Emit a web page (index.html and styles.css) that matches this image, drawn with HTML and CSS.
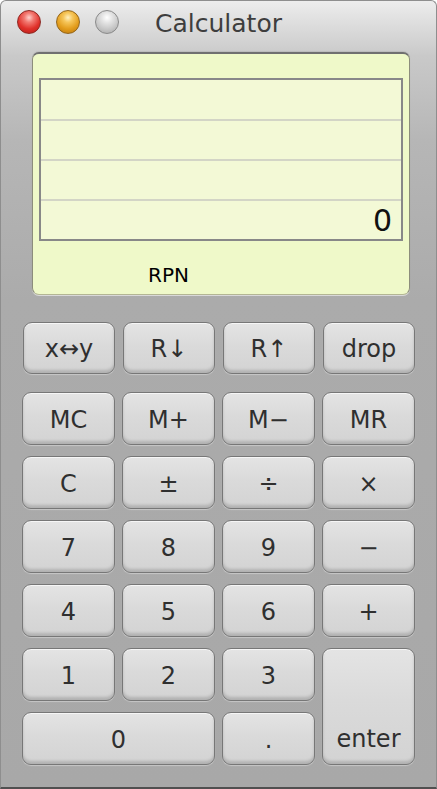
FILE: index.html
```html
<!DOCTYPE html>
<html>
<head>
<meta charset="utf-8">
<title>Calculator</title>
<link rel="stylesheet" href="styles.css">
</head>
<body>
<div class="window">
  <div class="titlebar">
    <div class="lights">
      <span class="light red"></span>
      <span class="light yellow"></span>
      <span class="light gray"></span>
    </div>
    <div class="title">Calculator</div>
    <div></div>
  </div>
  <div class="panel">
    <div class="lcd">
      <div class="lcd-row"></div>
      <div class="lcd-row"></div>
      <div class="lcd-row"></div>
      <div class="lcd-row value">0</div>
    </div>
    <div class="mode">RPN</div>
  </div>
  <div class="keypad">
    <button class="key top">x↔y</button>
    <button class="key top">R↓</button>
    <button class="key top">R↑</button>
    <button class="key top">drop</button>
    <button class="key">MC</button>
    <button class="key">M+</button>
    <button class="key">M−</button>
    <button class="key">MR</button>
    <button class="key">C</button>
    <button class="key">±</button>
    <button class="key">÷</button>
    <button class="key">×</button>
    <button class="key">7</button>
    <button class="key">8</button>
    <button class="key">9</button>
    <button class="key">−</button>
    <button class="key">4</button>
    <button class="key">5</button>
    <button class="key">6</button>
    <button class="key">+</button>
    <button class="key">1</button>
    <button class="key">2</button>
    <button class="key">3</button>
    <button class="key enter">enter</button>
    <button class="key zero">0</button>
    <button class="key">.</button>
  </div>
</div>
</body>
</html>
```
FILE: styles.css
```css
* { box-sizing: border-box; }
html, body { margin: 0; padding: 0; background: #ffffff; }
body { font-family: "DejaVu Sans", "Liberation Sans", sans-serif; }

.window {
  width: 437px;
  height: 789px;
  border: 1px solid #8e8e8e;
  border-bottom: 2px solid #505050;
  border-radius: 6px 6px 0 0;
  background: linear-gradient(#ededed 0px, #dcdcdc 25px, #c9c9c9 55px, #b6b6b6 140px, #ababab 300px, #a8a8a8 100%);
  overflow: hidden;
}

.titlebar {
  height: 51px;
  display: grid;
  grid-template-columns: 1fr auto 1fr;
  align-items: start;
  padding-top: 9px;
}
.lights {
  display: flex;
  gap: 15px;
  padding-left: 16px;
}
.light {
  width: 24px;
  height: 24px;
  border-radius: 50%;
  display: block;
}
.light.red {
  background: radial-gradient(circle at 50% 30%, #ffd0cc 0%, #f27a72 25%, #e0302a 60%, #b01c16 100%);
  border: 1px solid #8e2a24;
}
.light.yellow {
  background: radial-gradient(circle at 50% 30%, #fff0c0 0%, #f6c65a 25%, #e39d1c 60%, #b8740c 100%);
  border: 1px solid #93661c;
}
.light.gray {
  background: radial-gradient(circle at 50% 30%, #ffffff 0%, #e2e2e2 30%, #c4c4c4 65%, #a4a4a4 100%);
  border: 1px solid #8a8a8a;
}
.title {
  font-size: 25px;
  line-height: 29px;
  color: #3e3e3e;
  margin-top: -1px;
}

.panel {
  margin-left: 31px;
  width: 378px;
  height: 243px;
  border-top: 2px solid #707070;
  border-left: 1px solid #8c8d7c;
  border-right: 1px solid #8c8d7c;
  border-bottom: 1px solid #b3b694;
  border-radius: 7px;
  background: #eff9c9;
  box-shadow: 0 1px 0 rgba(255,255,255,0.55), 0 -1px 1px rgba(0,0,0,0.08);
  padding: 24px 0 0 6px;
}
.lcd {
  width: 364px;
  border: 2px solid #888888;
  background: #f3f9d6;
  display: grid;
  grid-template-rows: 39px 40px 40px 40px;
}
.lcd-row + .lcd-row {
  border-top: 2px solid #d3d5c6;
}
.lcd-row.value {
  font-size: 30px;
  line-height: 34px;
  color: #111111;
  text-align: right;
  padding-right: 9px;
  padding-top: 3px;
}
.mode {
  margin-top: 22px;
  margin-left: 109px;
  font-size: 20px;
  line-height: 24px;
  color: #000000;
}

.keypad {
  margin-top: 27px;
  padding-left: 21px;
  display: grid;
  grid-template-columns: repeat(4, 93px);
  grid-template-rows: 59px repeat(6, 53px);
  column-gap: 7px;
  row-gap: 11px;
}
.key {
  font-family: "DejaVu Sans", "Liberation Sans", sans-serif;
  font-size: 24px;
  color: #2f2f2f;
  margin: 0;
  padding: 2px 0 0 0;
  border: 1px solid #777777;
  border-radius: 9px;
  background: linear-gradient(#e4e4e4 0%, #dadada 45%, #d3d3d3 100%);
  box-shadow: inset 0 1px 0 #f6f6f6, inset 0 -3px 3px rgba(0,0,0,0.16), 0 1px 1px rgba(255,255,255,0.35);
  display: flex;
  align-items: center;
  justify-content: center;
}
.key.top {
  margin: 0 0 7px 1px;
}
.key.enter {
  grid-column: 4;
  grid-row: 6 / span 2;
  align-items: flex-end;
  padding: 0 0 11px 0;
}
.key.zero {
  grid-column: 1 / span 2;
}
```
